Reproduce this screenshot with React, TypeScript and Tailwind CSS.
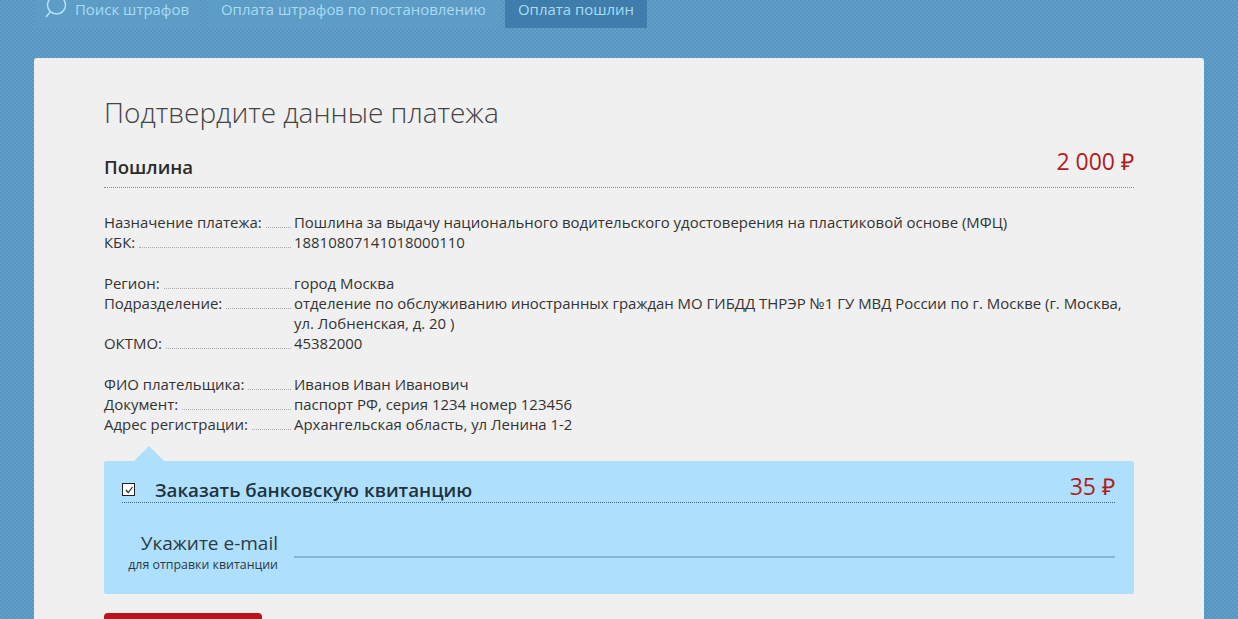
const rows = [
  [
    { label: 'Назначение платежа:', value: 'Пошлина за выдачу национального водительского удостоверения на пластиковой основе (МФЦ)' },
    { label: 'КБК:', value: '18810807141018000110' },
  ],
  [
    { label: 'Регион:', value: 'город Москва' },
    { label: 'Подразделение:', value: 'отделение по обслуживанию иностранных граждан МО ГИБДД ТНРЭР №1 ГУ МВД России по г. Москве (г. Москва, ул. Лобненская, д. 20 )' },
    { label: 'ОКТМО:', value: '45382000' },
  ],
  [
    { label: 'ФИО плательщика:', value: 'Иванов Иван Иванович' },
    { label: 'Документ:', value: 'паспорт РФ, серия 1234 номер 123456' },
    { label: 'Адрес регистрации:', value: 'Архангельская область, ул Ленина 1-2' },
  ],
]

function Row({ label, value }: { label: string; value: string }) {
  return (
    <div className="flex">
      <div className="flex w-[190px] shrink-0 items-start">
        <span className="pr-1">{label}</span>
        <span className="mt-[15px] mr-[3px] flex-1 border-b border-dotted border-[#aaa]" />
      </div>
      <div className="flex-1">{value}</div>
    </div>
  )
}

export default function App() {
  return (
    <div className="h-[619px] overflow-hidden bg-[#5b9ac4] bg-[conic-gradient(#63a0c8_25%,#5695c0_0_50%,#63a0c8_0_75%,#5695c0_0)] bg-[length:4px_4px] font-['Open_Sans',sans-serif] text-[#333]">
      <nav className="flex h-[28px] pl-[34px] text-[14.95px] leading-[18px] text-[#a9dcf5]">
        <a className="flex w-[166px] items-start gap-[8px] bg-[#5d9cc5]/80 pl-[11px]">
          <svg width="22" height="20" viewBox="0 0 22 20" fill="none" stroke="#b5e2f7" strokeWidth="1.5" className="-mt-[2px]">
            <circle cx="11.5" cy="7" r="9" />
            <path d="M5.5 13.5 L1 19" />
          </svg>
          Поиск штрафов
        </a>
        <a className="ml-[8px] w-[291px] bg-[#5d9cc5]/80 pl-[13px]">Оплата штрафов по постановлению</a>
        <a className="ml-[6px] w-[142px] bg-[#3f7dac] pl-[13px]">Оплата пошлин</a>
      </nav>

      <main className="mx-[34px] mt-[30px] h-[600px] rounded-[3px] bg-[#f0f0f0] pt-[35px] pr-[70px] pl-[70px]">
        <h1 className="text-[28px] leading-[38px] font-light text-[#444]">Подтвердите данные платежа</h1>

        <div className="mt-[12px] flex h-[45px] items-start justify-between border-b border-dotted border-[#888]">
          <h2 className="pt-[12px] text-[18.6px] leading-[24px] font-semibold text-[#2b2b2b]">Пошлина</h2>
          <span className="pt-[4px] text-[23px] leading-[28px] text-[#b01c22]">2 000 ₽</span>
        </div>

        <div className="mt-[24px] flex flex-col gap-[20px] text-[14.95px] leading-[20.25px]">
          {rows.map((group, i) => (
            <div key={i}>
              {group.map((row) => (
                <Row key={row.label} {...row} />
              ))}
            </div>
          ))}
        </div>

        <section className="relative mt-[27px] h-[133px] rounded-[2px] bg-[#aee0fe] pt-[14px] pr-[19px] pl-[18px]">
          <span className="absolute -top-[15px] left-[30px] size-0 border-x-[15px] border-b-[15px] border-x-transparent border-b-[#aee0fe]" />
          <div className="flex h-[28px] items-start border-b border-dotted border-[#3d6a85]">
            <span className="mt-[8px] flex size-[13px] items-center justify-center border border-[#222] bg-white">
              <svg width="10" height="10" viewBox="0 0 10 10" fill="none" stroke="#222" strokeWidth="1.2">
                <path d="M2 5 L4.2 7.5 L8.5 2" />
              </svg>
            </span>
            <h3 className="ml-[20px] pt-[3px] text-[18.75px] leading-[24px] font-semibold text-[#21323d]">Заказать банковскую квитанцию</h3>
            <span className="ml-auto -mt-[2px] text-[23px] leading-[26px] text-[#b01c22]">35 ₽</span>
          </div>
          <div className="mt-[27px] flex">
            <div className="w-[156px] text-right text-[#2b3a44]">
              <div className="text-[19px] leading-[27px]">Укажите e-mail</div>
              <div className="text-[12.4px] leading-[16px]">для отправки квитанции</div>
            </div>
            <div className="mt-[26px] ml-[16px] h-[2px] flex-1 bg-[#83b7d6]" />
          </div>
        </section>

        <div className="mt-[19px] h-[40px] w-[158px] rounded-[4px] bg-[#b8161c]" />
      </main>
    </div>
  )
}
